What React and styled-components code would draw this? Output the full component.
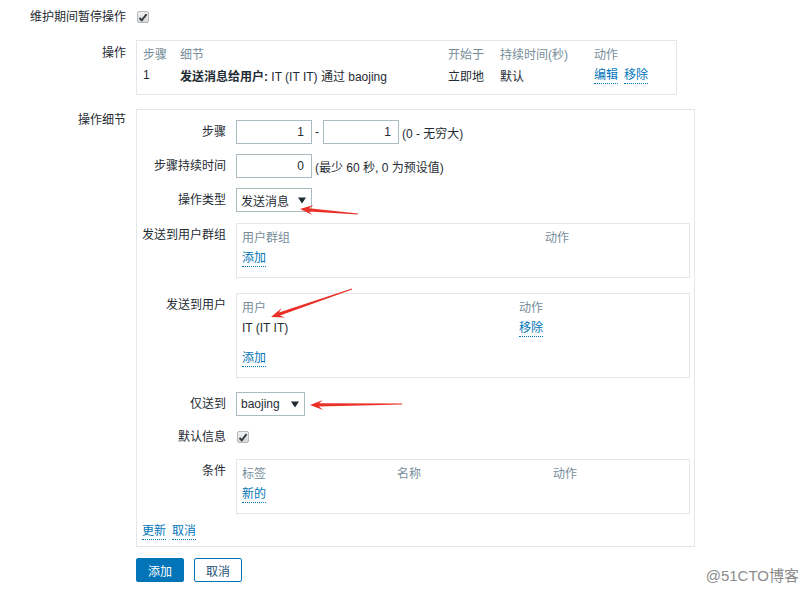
import React from "react";
import styled, { createGlobalStyle } from "styled-components";

const Global = createGlobalStyle`
  html, body { margin: 0; padding: 0; background: #fff; }
  body {
    font-family: "Liberation Sans", Arial, "Noto Sans CJK SC", sans-serif;
    font-size: 12px;
    color: #1f2c33;
  }
  * { box-sizing: border-box; }
`;

const Page = styled.div`
  position: relative;
  width: 808px;
  height: 594px;
  overflow: hidden;
  padding-top: 6px;
`;

const FormList = styled.div`
  display: flex;
  flex-direction: column;
`;

const FormRow = styled.div`
  display: grid;
  grid-template-columns: ${(p) => p.$label || 126}px auto;
  column-gap: 10px;
  align-items: ${(p) => (p.$top ? "start" : "center")};
  margin-top: ${(p) => p.$mt || 0}px;
  min-height: ${(p) => p.$h || 0}px;
`;

const Label = styled.div`
  text-align: right;
  line-height: 14px;
  white-space: nowrap;
  padding-top: ${(p) => p.$pt || 0}px;
`;

const Field = styled.div`
  display: flex;
  align-items: center;
`;

const Checkbox = styled.span`
  display: inline-flex;
  align-items: center;
  justify-content: center;
  width: 12px;
  height: 12px;
  border: 1px solid #b4b9bd;
  border-radius: 2px;
  background: linear-gradient(#f2f2f2, #d8d8d8);
  margin-left: 1px;
`;

const TableBox = styled.div`
  width: ${(p) => p.$w}px;
  border: 1px solid #e3e7ea;
  padding: 1px 5px 8px ${(p) => p.$pl || 5}px;
`;

const DataRow = styled.div`
  display: grid;
  grid-template-columns: ${(p) => p.$cols};
  height: 22px;
  align-items: center;
  white-space: nowrap;
  color: ${(p) => (p.$head ? "#768d99" : "#1f2c33")};
  margin-top: ${(p) => p.$mt || 0}px;
`;

const Bold = styled.b`
  font-weight: bold;
`;

const Link = styled.span`
  color: #0275b8;
  border-bottom: 1px dotted #0275b8;
  line-height: 14px;
  padding-bottom: 1px;
  margin-right: ${(p) => p.$mr || 0}px;
`;

const DetailBox = styled.div`
  width: 559px;
  border: 1px solid #e3e7ea;
  padding: 10px 5px 6px 4px;
  display: flex;
  flex-direction: column;
`;

const Input = styled.div`
  width: 76px;
  height: 24px;
  border: 1px solid #acbbc2;
  text-align: right;
  padding-right: 7px;
  line-height: 22px;
  background: #fff;
`;

const Dash = styled.span`
  margin: 0 4px 0 3px;
`;

const Hint = styled.span`
  margin-left: 3px;
`;

const Select = styled.div`
  width: ${(p) => p.$w}px;
  height: 24px;
  border: 1px solid #acbbc2;
  display: flex;
  align-items: center;
  justify-content: space-between;
  padding: 0 5px 0 4px;
  background: #fff;
`;

const Caret = () => (
  <svg width="8" height="7" viewBox="0 0 8 7">
    <path d="M0 0.5 H8 L4 6.5 Z" fill="#1f2c33" />
  </svg>
);

const Check = () => (
  <svg width="10" height="9" viewBox="0 0 10 9">
    <path d="M1.5 5 L3.8 7.3 L8.6 1.2" fill="none" stroke="#3a3f44" strokeWidth="2" />
  </svg>
);

const LinkRow = styled.div`
  display: flex;
  align-items: center;
  height: 16px;
  margin-top: 10px;
  padding-left: 1px;
`;

const ButtonRow = styled.div`
  display: flex;
  gap: 10px;
  margin-top: 11px;
  padding-left: 136px;
`;

const Button = styled.div`
  width: 48px;
  height: 24px;
  display: flex;
  align-items: center;
  justify-content: center;
  border: 1px solid #0275b8;
  border-radius: 2px;
  background: ${(p) => (p.$primary ? "#0275b8" : "#fff")};
  color: ${(p) => (p.$primary ? "#fff" : "#1f4f75")};
`;

const Watermark = styled.div`
  position: absolute;
  right: 9px;
  bottom: 9px;
  font-family: "Liberation Sans", Arial, "Noto Sans CJK SC", sans-serif;
  font-size: 15px;
  color: #8c8c8c;
`;

const Overlay = styled.svg`
  position: absolute;
  left: 0;
  top: 0;
  pointer-events: none;
`;

function arrowPoints(x1, y1, x2, y2) {
  const dx = x2 - x1;
  const dy = y2 - y1;
  const len = Math.hypot(dx, dy);
  const ux = dx / len;
  const uy = dy / len;
  const nx = -uy;
  const ny = ux;
  const headLen = 13;
  const headW = 5;
  const neckW = 1.6;
  const tailW = 0.4;
  const bx = x2 - ux * headLen;
  const by = y2 - uy * headLen;
  const kx = x2 - ux * (headLen - 4);
  const ky = y2 - uy * (headLen - 4);
  const pts = [
    [x1 + nx * tailW, y1 + ny * tailW],
    [kx + nx * neckW, ky + ny * neckW],
    [bx + nx * headW, by + ny * headW],
    [x2, y2],
    [bx - nx * headW, by - ny * headW],
    [kx - nx * neckW, ky - ny * neckW],
    [x1 - nx * tailW, y1 - ny * tailW],
  ];
  return pts.map((p) => p.map((v) => v.toFixed(1)).join(",")).join(" ");
}

const arrows = [
  [358, 214, 300, 209],
  [352, 289, 271, 317],
  [402, 404, 310, 405],
];

export default function App() {
  return (
    <>
      <Global />
      <Page>
        <FormList>
          <FormRow $h={22}>
            <Label>维护期间暂停操作</Label>
            <Field>
              <Checkbox><Check /></Checkbox>
            </Field>
          </FormRow>

          <FormRow $top $mt={12}>
            <Label $pt={6}>操作</Label>
            <TableBox $w={541} $pl={6}>
              <DataRow $head $cols="37px 268px 52px 94px auto">
                <span>步骤</span>
                <span>细节</span>
                <span>开始于</span>
                <span>持续时间(秒)</span>
                <span>动作</span>
              </DataRow>
              <DataRow $cols="37px 268px 52px 94px auto">
                <span>1</span>
                <span>
                  <Bold>发送消息给用户:</Bold> IT (IT IT) 通过 baojing
                </span>
                <span>立即地</span>
                <span>默认</span>
                <span>
                  <Link $mr={6}>编辑</Link>
                  <Link>移除</Link>
                </span>
              </DataRow>
            </TableBox>
          </FormRow>

          <FormRow $top $mt={14}>
            <Label $pt={4}>操作细节</Label>
            <DetailBox>
              <FormRow $label={85}>
                <Label>步骤</Label>
                <Field>
                  <Input>1</Input>
                  <Dash>-</Dash>
                  <Input>1</Input>
                  <Hint>(0 - 无穷大)</Hint>
                </Field>
              </FormRow>
              <FormRow $label={85} $mt={10}>
                <Label>步骤持续时间</Label>
                <Field>
                  <Input>0</Input>
                  <Hint>(最少 60 秒, 0 为预设值)</Hint>
                </Field>
              </FormRow>
              <FormRow $label={85} $mt={10}>
                <Label>操作类型</Label>
                <Field>
                  <Select $w={76}>
                    <span>发送消息</span>
                    <Caret />
                  </Select>
                </Field>
              </FormRow>
              <FormRow $label={85} $mt={11} $top>
                <Label $pt={5}>发送到用户群组</Label>
                <TableBox $w={454}>
                  <DataRow $head $cols="303px auto">
                    <span>用户群组</span>
                    <span>动作</span>
                  </DataRow>
                  <DataRow $cols="303px auto">
                    <span><Link>添加</Link></span>
                  </DataRow>
                </TableBox>
              </FormRow>
              <FormRow $label={85} $mt={15} $top>
                <Label $pt={5}>发送到用户</Label>
                <TableBox $w={454}>
                  <DataRow $head $cols="277px auto">
                    <span>用户</span>
                    <span>动作</span>
                  </DataRow>
                  <DataRow $cols="277px auto">
                    <span>IT (IT IT)</span>
                    <span><Link>移除</Link></span>
                  </DataRow>
                  <DataRow $cols="277px auto" $mt={8}>
                    <span><Link>添加</Link></span>
                  </DataRow>
                </TableBox>
              </FormRow>
              <FormRow $label={85} $mt={14}>
                <Label>仅送到</Label>
                <Field>
                  <Select $w={69}>
                    <span>baojing</span>
                    <Caret />
                  </Select>
                </Field>
              </FormRow>
              <FormRow $label={85} $mt={9} $h={24}>
                <Label>默认信息</Label>
                <Field>
                  <Checkbox><Check /></Checkbox>
                </Field>
              </FormRow>
              <FormRow $label={85} $mt={10} $top>
                <Label $pt={5}>条件</Label>
                <TableBox $w={454}>
                  <DataRow $head $cols="155px 156px auto">
                    <span>标签</span>
                    <span>名称</span>
                    <span>动作</span>
                  </DataRow>
                  <DataRow $cols="155px 156px auto">
                    <span><Link>新的</Link></span>
                  </DataRow>
                </TableBox>
              </FormRow>
              <LinkRow>
                <Link $mr={6}>更新</Link>
                <Link>取消</Link>
              </LinkRow>
            </DetailBox>
          </FormRow>
        </FormList>

        <ButtonRow>
          <Button $primary>添加</Button>
          <Button>取消</Button>
        </ButtonRow>

        <Overlay width="808" height="594" viewBox="0 0 808 594">
          {arrows.map((a, i) => (
            <polygon key={i} points={arrowPoints(...a)} fill="#ea2f27" />
          ))}
        </Overlay>

        <Watermark>@51CTO博客</Watermark>
      </Page>
    </>
  );
}
